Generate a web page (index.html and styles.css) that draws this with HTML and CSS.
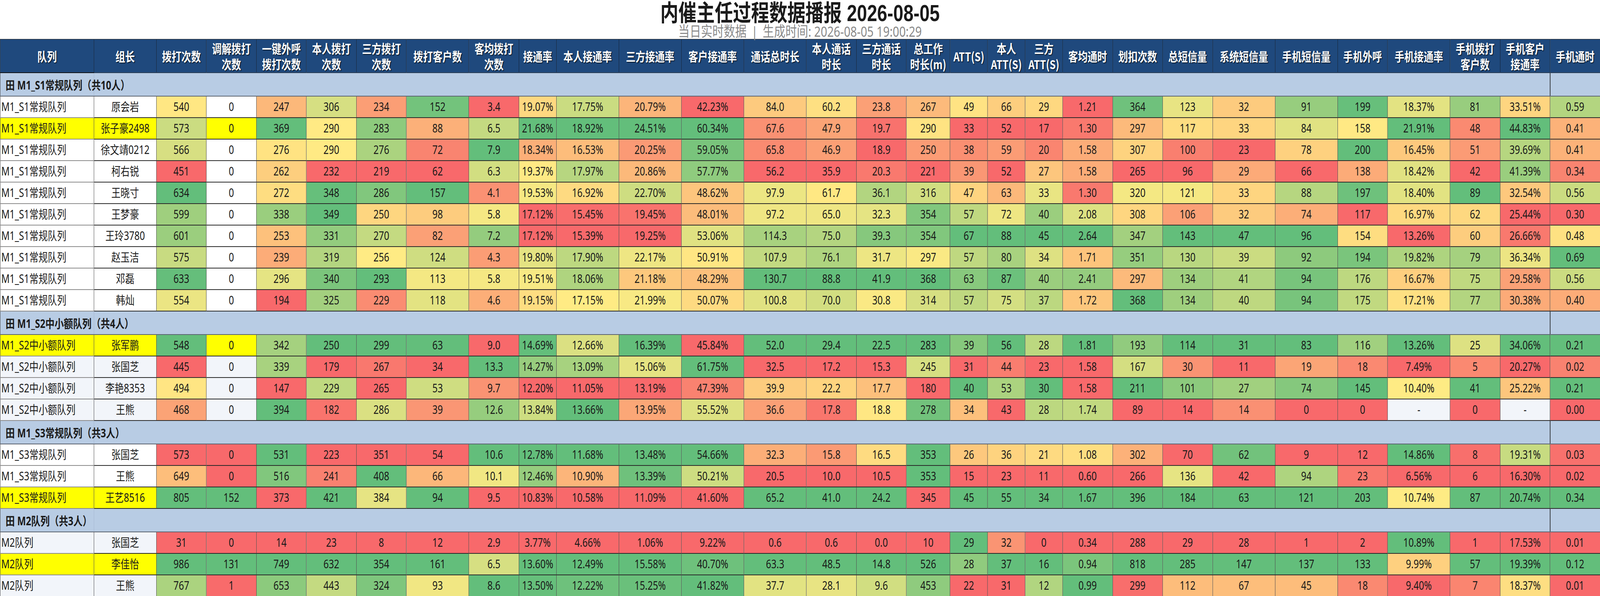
FILE: index.html
```html
<!DOCTYPE html>
<html lang="zh-CN">
<head>
<meta charset="utf-8">
<title>内催主任过程数据播报 2026-08-05</title>
<link rel="stylesheet" href="styles.css">
</head>
<body>
<div class="viewport">
<div class="page" id="page">
<header class="report-head">
  <h1 class="title">内催主任过程数据播报 2026-08-05</h1>
  <p class="subtitle">当日实时数据<span class="sep">|</span>生成时间: 2026-08-05 19:00:29</p>
</header>
<table class="report">
  <colgroup>
    <col class="c-q"><col class="c5"><col class="c4"><col class="c4"><col class="c4"><col class="c4"><col class="c4"><col class="c5"><col class="c4"><col class="c3"><col class="c5"><col class="c5"><col class="c5"><col class="c5"><col class="c4"><col class="c4"><col class="c35"><col class="c3"><col class="c3"><col class="c3"><col class="c4"><col class="c4"><col class="c4"><col class="c5"><col class="c5"><col class="c4"><col class="c5"><col class="c4"><col class="c4"><col class="c4">
  </colgroup>
  <thead>
    <tr class="head">
      <th class="h-first">队列</th><th>组长</th><th>拨打次数</th><th>调解拨打<br>次数</th><th>一键外呼<br>拨打次数</th><th>本人拨打<br>次数</th><th>三方拨打<br>次数</th><th>拨打客户数</th><th>客均拨打<br>次数</th><th>接通率</th><th>本人接通率</th><th>三方接通率</th><th>客户接通率</th><th>通话总时长</th><th>本人通话<br>时长</th><th>三方通话<br>时长</th><th>总工作<br>时长(m)</th><th>ATT(S)</th><th>本人<br>ATT(S)</th><th>三方<br>ATT(S)</th><th>客均通时</th><th>划扣次数</th><th>总短信量</th><th>系统短信量</th><th>手机短信量</th><th>手机外呼</th><th>手机接通率</th><th>手机拨打<br>客户数</th><th>手机客户<br>接通率</th><th>手机通时</th>
    </tr>
  </thead>
  <tbody class="grp">
    <tr class="grp-row"><td class="glabel">田 M1_S1常规队列（共10人）</td><td class="gfill" colspan="28"></td><td class="glast"></td></tr>
    <tr class="row"><td class="q">M1_S1常规队列</td><td>原会岩</td><td>540</td><td>0</td><td>247</td><td>306</td><td>234</td><td>152</td><td>3.4</td><td>19.07%</td><td>17.75%</td><td>20.79%</td><td>42.23%</td><td>84.0</td><td>60.2</td><td>23.8</td><td>267</td><td>49</td><td>66</td><td>29</td><td>1.21</td><td>364</td><td>123</td><td>32</td><td>91</td><td>199</td><td>18.37%</td><td>81</td><td>33.51%</td><td>0.59</td></tr>
    <tr class="row hl"><td class="q">M1_S1常规队列</td><td>张子豪2498</td><td>573</td><td>0</td><td>369</td><td>290</td><td>283</td><td>88</td><td>6.5</td><td>21.68%</td><td>18.92%</td><td>24.51%</td><td>60.34%</td><td>67.6</td><td>47.9</td><td>19.7</td><td>290</td><td>33</td><td>52</td><td>17</td><td>1.30</td><td>297</td><td>117</td><td>33</td><td>84</td><td>158</td><td>21.91%</td><td>48</td><td>44.83%</td><td>0.41</td></tr>
    <tr class="row"><td class="q">M1_S1常规队列</td><td>徐文靖0212</td><td>566</td><td>0</td><td>276</td><td>290</td><td>276</td><td>72</td><td>7.9</td><td>18.34%</td><td>16.53%</td><td>20.25%</td><td>59.05%</td><td>65.8</td><td>46.9</td><td>18.9</td><td>250</td><td>38</td><td>59</td><td>20</td><td>1.58</td><td>307</td><td>100</td><td>23</td><td>78</td><td>200</td><td>16.45%</td><td>51</td><td>39.69%</td><td>0.41</td></tr>
    <tr class="row"><td class="q">M1_S1常规队列</td><td>柯右锐</td><td>451</td><td>0</td><td>262</td><td>232</td><td>219</td><td>62</td><td>6.3</td><td>19.37%</td><td>17.97%</td><td>20.86%</td><td>57.77%</td><td>56.2</td><td>35.9</td><td>20.3</td><td>221</td><td>39</td><td>52</td><td>27</td><td>1.58</td><td>265</td><td>96</td><td>29</td><td>66</td><td>138</td><td>18.42%</td><td>42</td><td>41.39%</td><td>0.34</td></tr>
    <tr class="row"><td class="q">M1_S1常规队列</td><td>王晓寸</td><td>634</td><td>0</td><td>272</td><td>348</td><td>286</td><td>157</td><td>4.1</td><td>19.53%</td><td>16.92%</td><td>22.70%</td><td>48.62%</td><td>97.9</td><td>61.7</td><td>36.1</td><td>316</td><td>47</td><td>63</td><td>33</td><td>1.30</td><td>320</td><td>121</td><td>33</td><td>88</td><td>197</td><td>18.40%</td><td>89</td><td>32.54%</td><td>0.56</td></tr>
    <tr class="row"><td class="q">M1_S1常规队列</td><td>王梦豪</td><td>599</td><td>0</td><td>338</td><td>349</td><td>250</td><td>98</td><td>5.8</td><td>17.12%</td><td>15.45%</td><td>19.45%</td><td>48.01%</td><td>97.2</td><td>65.0</td><td>32.3</td><td>354</td><td>57</td><td>72</td><td>40</td><td>2.08</td><td>308</td><td>106</td><td>32</td><td>74</td><td>117</td><td>16.97%</td><td>62</td><td>25.44%</td><td>0.30</td></tr>
    <tr class="row"><td class="q">M1_S1常规队列</td><td>王玲3780</td><td>601</td><td>0</td><td>253</td><td>331</td><td>270</td><td>82</td><td>7.2</td><td>17.12%</td><td>15.39%</td><td>19.25%</td><td>53.06%</td><td>114.3</td><td>75.0</td><td>39.3</td><td>354</td><td>67</td><td>88</td><td>45</td><td>2.64</td><td>347</td><td>143</td><td>47</td><td>96</td><td>154</td><td>13.26%</td><td>60</td><td>26.66%</td><td>0.48</td></tr>
    <tr class="row"><td class="q">M1_S1常规队列</td><td>赵玉洁</td><td>575</td><td>0</td><td>239</td><td>319</td><td>256</td><td>124</td><td>4.3</td><td>19.80%</td><td>17.90%</td><td>22.17%</td><td>50.91%</td><td>107.9</td><td>76.1</td><td>31.7</td><td>297</td><td>57</td><td>80</td><td>34</td><td>1.71</td><td>351</td><td>130</td><td>39</td><td>92</td><td>194</td><td>19.82%</td><td>79</td><td>36.34%</td><td>0.69</td></tr>
    <tr class="row"><td class="q">M1_S1常规队列</td><td>邓磊</td><td>633</td><td>0</td><td>296</td><td>340</td><td>293</td><td>113</td><td>5.8</td><td>19.51%</td><td>18.06%</td><td>21.18%</td><td>48.29%</td><td>130.7</td><td>88.8</td><td>41.9</td><td>368</td><td>63</td><td>87</td><td>40</td><td>2.41</td><td>297</td><td>134</td><td>41</td><td>94</td><td>176</td><td>16.67%</td><td>75</td><td>29.58%</td><td>0.56</td></tr>
    <tr class="row"><td class="q">M1_S1常规队列</td><td>韩灿</td><td>554</td><td>0</td><td>194</td><td>325</td><td>229</td><td>118</td><td>4.6</td><td>19.15%</td><td>17.15%</td><td>21.99%</td><td>50.07%</td><td>100.8</td><td>70.0</td><td>30.8</td><td>314</td><td>57</td><td>75</td><td>37</td><td>1.72</td><td>368</td><td>134</td><td>40</td><td>94</td><td>175</td><td>17.21%</td><td>77</td><td>30.38%</td><td>0.40</td></tr>
  </tbody>
  <tbody class="grp alt">
    <tr class="grp-row"><td class="glabel">田 M1_S2中小额队列（共4人）</td><td class="gfill" colspan="28"></td><td class="glast"></td></tr>
    <tr class="row hl"><td class="q">M1_S2中小额队列</td><td>张军鹏</td><td>548</td><td>0</td><td>342</td><td>250</td><td>299</td><td>63</td><td>9.0</td><td>14.69%</td><td>12.66%</td><td>16.39%</td><td>45.84%</td><td>52.0</td><td>29.4</td><td>22.5</td><td>283</td><td>39</td><td>56</td><td>28</td><td>1.81</td><td>193</td><td>114</td><td>31</td><td>83</td><td>116</td><td>13.26%</td><td>25</td><td>34.06%</td><td>0.21</td></tr>
    <tr class="row"><td class="q">M1_S2中小额队列</td><td>张国芝</td><td>445</td><td>0</td><td>339</td><td>179</td><td>267</td><td>34</td><td>13.3</td><td>14.27%</td><td>13.09%</td><td>15.06%</td><td>61.75%</td><td>32.5</td><td>17.2</td><td>15.3</td><td>245</td><td>31</td><td>44</td><td>23</td><td>1.58</td><td>167</td><td>30</td><td>11</td><td>19</td><td>18</td><td>7.49%</td><td>5</td><td>20.27%</td><td>0.02</td></tr>
    <tr class="row"><td class="q">M1_S2中小额队列</td><td>李艳8353</td><td>494</td><td>0</td><td>147</td><td>229</td><td>265</td><td>53</td><td>9.7</td><td>12.20%</td><td>11.05%</td><td>13.19%</td><td>47.39%</td><td>39.9</td><td>22.2</td><td>17.7</td><td>180</td><td>40</td><td>53</td><td>30</td><td>1.58</td><td>211</td><td>101</td><td>27</td><td>74</td><td>145</td><td>10.40%</td><td>41</td><td>25.22%</td><td>0.21</td></tr>
    <tr class="row"><td class="q">M1_S2中小额队列</td><td>王熊</td><td>468</td><td>0</td><td>394</td><td>182</td><td>286</td><td>39</td><td>12.6</td><td>13.84%</td><td>13.66%</td><td>13.95%</td><td>55.52%</td><td>36.6</td><td>17.8</td><td>18.8</td><td>278</td><td>34</td><td>43</td><td>28</td><td>1.74</td><td>89</td><td>14</td><td>14</td><td>0</td><td>0</td><td>-</td><td>0</td><td>-</td><td>0.00</td></tr>
  </tbody>
  <tbody class="grp">
    <tr class="grp-row"><td class="glabel">田 M1_S3常规队列（共3人）</td><td class="gfill" colspan="28"></td><td class="glast"></td></tr>
    <tr class="row"><td class="q">M1_S3常规队列</td><td>张国芝</td><td>573</td><td>0</td><td>531</td><td>223</td><td>351</td><td>54</td><td>10.6</td><td>12.78%</td><td>11.68%</td><td>13.48%</td><td>54.66%</td><td>32.3</td><td>15.8</td><td>16.5</td><td>353</td><td>26</td><td>36</td><td>21</td><td>1.08</td><td>302</td><td>70</td><td>62</td><td>9</td><td>12</td><td>14.86%</td><td>8</td><td>19.31%</td><td>0.03</td></tr>
    <tr class="row"><td class="q">M1_S3常规队列</td><td>王熊</td><td>649</td><td>0</td><td>516</td><td>241</td><td>408</td><td>66</td><td>10.1</td><td>12.46%</td><td>10.90%</td><td>13.39%</td><td>50.21%</td><td>20.5</td><td>10.0</td><td>10.5</td><td>353</td><td>15</td><td>23</td><td>11</td><td>0.60</td><td>266</td><td>136</td><td>42</td><td>94</td><td>23</td><td>6.56%</td><td>6</td><td>16.30%</td><td>0.02</td></tr>
    <tr class="row hl"><td class="q">M1_S3常规队列</td><td>王艺8516</td><td>805</td><td>152</td><td>373</td><td>421</td><td>384</td><td>94</td><td>9.5</td><td>10.83%</td><td>10.58%</td><td>11.09%</td><td>41.60%</td><td>65.2</td><td>41.0</td><td>24.2</td><td>345</td><td>45</td><td>55</td><td>34</td><td>1.67</td><td>396</td><td>184</td><td>63</td><td>121</td><td>203</td><td>10.74%</td><td>87</td><td>20.74%</td><td>0.34</td></tr>
  </tbody>
  <tbody class="grp alt">
    <tr class="grp-row"><td class="glabel">田 M2队列（共3人）</td><td class="gfill" colspan="28"></td><td class="glast"></td></tr>
    <tr class="row"><td class="q">M2队列</td><td>张国芝</td><td>31</td><td>0</td><td>14</td><td>23</td><td>8</td><td>12</td><td>2.9</td><td>3.77%</td><td>4.66%</td><td>1.06%</td><td>9.22%</td><td>0.6</td><td>0.6</td><td>0.0</td><td>10</td><td>29</td><td>32</td><td>0</td><td>0.34</td><td>288</td><td>29</td><td>28</td><td>1</td><td>2</td><td>10.89%</td><td>1</td><td>17.53%</td><td>0.01</td></tr>
    <tr class="row hl"><td class="q">M2队列</td><td>李佳怡</td><td>986</td><td>131</td><td>749</td><td>632</td><td>354</td><td>161</td><td>6.5</td><td>13.60%</td><td>12.49%</td><td>15.58%</td><td>40.70%</td><td>63.3</td><td>48.5</td><td>14.8</td><td>526</td><td>28</td><td>37</td><td>16</td><td>0.94</td><td>818</td><td>285</td><td>147</td><td>137</td><td>133</td><td>9.99%</td><td>57</td><td>19.39%</td><td>0.12</td></tr>
    <tr class="row"><td class="q">M2队列</td><td>王熊</td><td>767</td><td>1</td><td>653</td><td>443</td><td>324</td><td>93</td><td>8.6</td><td>13.50%</td><td>12.22%</td><td>15.25%</td><td>41.82%</td><td>37.7</td><td>28.1</td><td>9.6</td><td>453</td><td>22</td><td>31</td><td>12</td><td>0.99</td><td>299</td><td>112</td><td>67</td><td>45</td><td>18</td><td>9.40%</td><td>7</td><td>18.37%</td><td>0.01</td></tr>
  </tbody>
</table>
</div>
</div>
<script src="script.js"></script>
</body>
</html>
```

FILE: styles.css
```css
* { box-sizing: border-box; }
html, body {
  margin: 0;
  padding: 0;
  background: #ffffff;
  overflow: hidden;
}
body {
  font-family: "Noto Sans", "Noto Sans CJK SC", sans-serif;
  color: #1a1a1a;
}
.viewport {
  width: 100%;
  overflow: hidden;
}
.page {
  width: 5200px;
  transform-origin: 0 0;
}

.report-head {
  height: 100px;
  display: flex;
  flex-direction: column;
  align-items: center;
  border-bottom: 1px solid #cfcfcf;
}
.title {
  margin: 0;
  padding-top: 6px;
  font-family: "Liberation Sans", "Noto Sans CJK SC", sans-serif;
  font-weight: 700;
  font-size: 59px;
  line-height: 56px;
  color: #1a1a1a;
}
.subtitle {
  margin: 0;
  font-family: "Noto Sans", "Noto Sans CJK SC", sans-serif;
  font-size: 37px;
  line-height: 36px;
  color: #8a8a8a;
}
.sep { margin: 0 16px; }

.report {
  width: 5200px;
  table-layout: fixed;
  border-collapse: collapse;
}
.c-q { width: 304.7px; }
.c5 { width: 203.1px; }
.c4 { width: 162.5px; }
.c3 { width: 121.9px; }
.c35 { width: 142.2px; }

.head th {
  height: 85px;
  padding: 0;
  background: #1f497d;
  color: #ffffff;
  font-family: "Noto Sans CJK SC", sans-serif;
  font-weight: 700;
  font-size: 31.5px;
  line-height: 40px;
  text-align: center;
  vertical-align: middle;
  white-space: nowrap;
  text-shadow: 2px 2px 2px rgba(0, 0, 0, 0.65);
  border: 1px solid #111a26;
  border-bottom: 2px solid #2b3d55;
}
.head th.h-first { border-bottom: 2px solid #111111; }

.row td {
  height: 55px;
  padding: 0 2px;
  font-size: 30px;
  line-height: 40px;
  text-align: center;
  vertical-align: middle;
  white-space: nowrap;
  overflow: hidden;
  background: #ffffff;
  border-left: 1px solid #222222;
  border-right: 1px solid #222222;
  border-top: 2px solid #2a2a2a;
  border-bottom: 2px solid #2a2a2a;
}
.row td.q {
  text-align: left;
  padding-left: 3px;
  border-top-color: #8c8c8c;
  border-bottom-color: #8c8c8c;
}
.alt .row td { background: #f2f5fa; }
.row.hl td { background: #ffff00; }

.grp-row td {
  height: 60px;
  padding: 0;
  background: #b8cce4;
  border-top: 2px solid #5c6470;
  border-bottom: 2px solid #5c6470;
}
.grp-row td.glabel {
  padding-left: 17px;
  text-align: left;
  white-space: nowrap;
  overflow: visible;
  font-family: "Noto Sans", "Noto Sans CJK SC", sans-serif;
  font-weight: 700;
  font-size: 30px;
  color: #1a1a1a;
  border-left: 1px solid #222222;
  border-right: 1px solid #9fb3cf;
}
.grp-row td.gfill { border-left: 1px solid #9fb3cf; }
.grp-row td.glast {
  border-left: 2px solid #1a1a1a;
  border-right: 1px solid #222222;
  border-top: 2px solid #1a1a1a;
}
```

FILE: script.js
```js
(function () {
  /* fit the 5200px-wide report into the actual window width */
  var page = document.getElementById('page');
  var k = window.innerWidth / 5200;
  if (page && Math.abs(k - 1) > 0.001) {
    page.style.transform = 'scaleX(' + k + ')';
  }

  /* three-colour scale (red - yellow - green) per queue group and column */
  var RED = [248, 105, 107], YEL = [255, 235, 132], GRN = [99, 190, 123];
  function mix(a, b, t) {
    return 'rgb(' + a.map(function (v, i) { return Math.round(v + (b[i] - v) * t); }).join(',') + ')';
  }
  document.querySelectorAll('tbody.grp').forEach(function (tb) {
    var rows = [].slice.call(tb.querySelectorAll('tr.row'));
    if (!rows.length) return;
    var n = rows[0].cells.length;
    for (var c = 2; c < n; c++) {
      var vals = rows.map(function (r) {
        var v = parseFloat(r.cells[c].textContent.trim().replace('%', ''));
        return isNaN(v) ? null : v;
      });
      var nums = vals.filter(function (v) { return v !== null; });
      if (!nums.length) continue;
      var mn = Math.min.apply(null, nums), mx = Math.max.apply(null, nums);
      if (!(mx > mn)) continue;
      var mid = (mn + mx) / 2;
      rows.forEach(function (r, i) {
        var v = vals[i];
        if (v === null) return;
        var col = v <= mid ? mix(RED, YEL, (v - mn) / (mid - mn)) : mix(YEL, GRN, (v - mid) / (mx - mid));
        r.cells[c].style.backgroundColor = col;
      });
    }
  });
})();
```
